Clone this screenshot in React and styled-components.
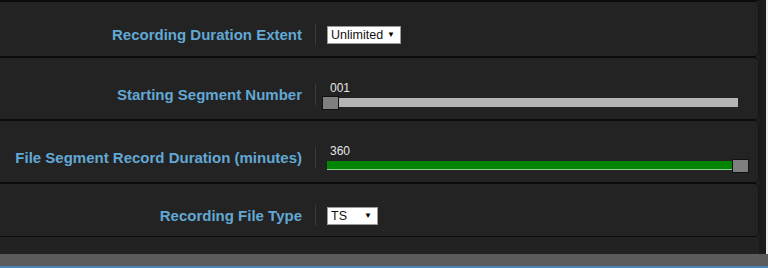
import React from 'react';
import styled, {createGlobalStyle} from 'styled-components';

const GlobalStyle = createGlobalStyle`
  html, body {
    margin: 0;
    padding: 0;
    background: #222;
    font-family: "Liberation Sans", Arial, sans-serif;
  }
`;

const Page = styled.div`
  width: 768px;
  height: 268px;
  display: flex;
  flex-direction: column;
  overflow: hidden;
`;

const Main = styled.div`
  height: 254px;
  display: flex;
  background: #1b1b1b;
  border-right: 2px solid #ececec;
`;

const List = styled.div`
  width: 759px;
  background: #222;
  border-top: 1px solid #0b0b0b;
`;

const Row = styled.div`
  height: ${p => p.$h}px;
  padding-top: 11px;
  box-sizing: content-box;
  display: flex;
  align-items: center;
  background: #232323;
  border-top: 1px solid #0b0b0b;
  border-bottom: 1px solid #0b0b0b;
  border-right: 1px solid #151515;
  border-radius: 0 5px 5px 0;
`;

const Label = styled.div`
  width: 302px;
  flex: none;
  text-align: right;
  font-size: 15px;
  font-weight: 700;
  color: #62a8d4;
  white-space: nowrap;
`;

const Divider = styled.div`
  width: 1px;
  height: 21px;
  margin: 0 11px 0 13px;
  background: #3a3a3a;
`;

const Select = styled.div`
  width: ${p => p.$w}px;
  height: 18px;
  box-sizing: border-box;
  display: flex;
  align-items: center;
  justify-content: space-between;
  padding: 0 5px 0 3px;
  background: #fff;
  border: 1px solid #9a9a9a;
  font-size: 12.5px;
  color: #111;
`;

const Arrow = styled.span`
  font-size: 8px;
  color: #000;
`;

const SliderBox = styled.div`
  display: flex;
  flex-direction: column;
`;

const Value = styled.div`
  font-size: 12px;
  color: #e6e6e6;
  padding-left: 3px;
  margin-bottom: 3px;
`;

const Track = styled.div`
  position: relative;
  width: 411px;
  height: 9px;
  box-sizing: border-box;
  background: #b4b4b4;
`;

const Fill = styled.div`
  height: 100%;
  box-sizing: border-box;
  background: #028502;
  border-bottom: 1px solid #8fd08f;
`;

const Thumb = styled.div`
  position: absolute;
  top: -2px;
  width: 17px;
  height: 14px;
  box-sizing: border-box;
  margin-left: -5px;
  background: #7f7f7f;
  border: 1px solid #111;
`;

const Footer = styled.div`
  height: 12px;
  background: #5b5b5b;
  border-bottom: 2px solid #4a85b6;
`;

const Slider = ({value, pct}) => (
  <SliderBox>
    <Value>{value}</Value>
    <Track>
      {pct > 0 && <Fill style={{width: `${pct * 100}%`}} />}
      <Thumb style={{left: `${pct * 410}px`}} />
    </Track>
  </SliderBox>
);

export default function App() {
  return (
    <Page>
      <GlobalStyle />
      <Main>
        <List>
          <Row $h={43}>
            <Label>Recording Duration Extent</Label>
            <Divider />
            <Select $w={74}>Unlimited <Arrow>▼</Arrow></Select>
          </Row>
          <Row $h={50}>
            <Label>Starting Segment Number</Label>
            <Divider />
            <Slider value="001" pct={0} />
          </Row>
          <Row $h={50}>
            <Label>File Segment Record Duration (minutes)</Label>
            <Divider />
            <Slider value="360" pct={1} />
          </Row>
          <Row $h={41}>
            <Label>Recording File Type</Label>
            <Divider />
            <Select $w={51}>TS <Arrow>▼</Arrow></Select>
          </Row>
        </List>
      </Main>
      <Footer />
    </Page>
  );
}
